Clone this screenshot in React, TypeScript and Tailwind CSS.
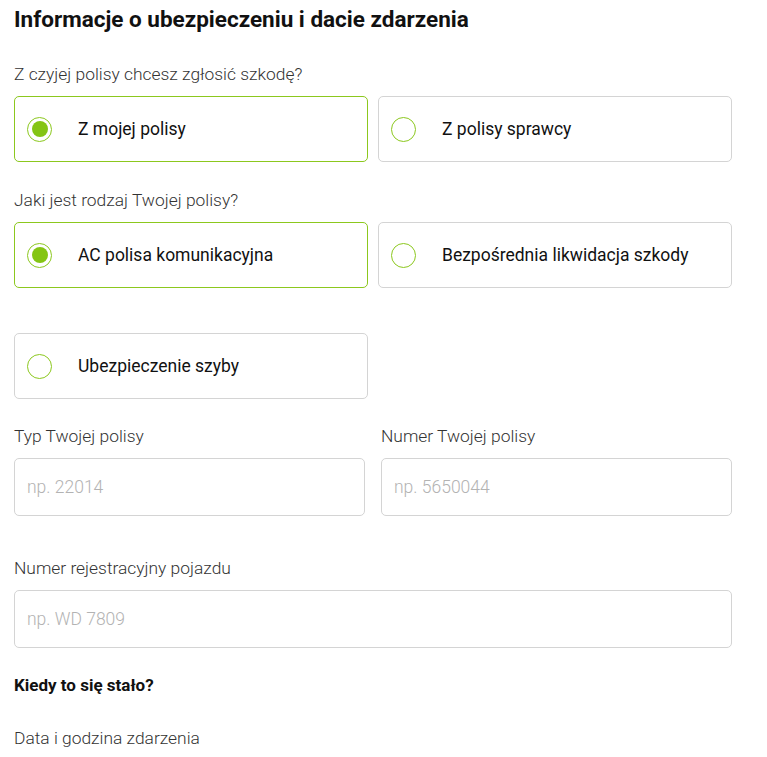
import { useState } from "react";

type Option = { id: string; label: string };

const Radio = ({ checked }: { checked: boolean }) => (
  <span className="w-[25px] h-[25px] shrink-0 rounded-full border-[1.5px] border-[#8cc81e] flex items-center justify-center">
    {checked && <span className="w-[16px] h-[16px] rounded-full bg-[#84c514]" />}
  </span>
);

const OptionCard = ({
  option,
  checked,
  onSelect,
}: {
  option: Option;
  checked: boolean;
  onSelect: () => void;
}) => (
  <button
    type="button"
    onClick={onSelect}
    className={`h-[66px] flex items-center gap-[26px] pl-[12px] rounded-[5px] border text-left bg-white cursor-pointer ${
      checked ? "border-[#8cc81e]" : "border-[#d4d4d4]"
    }`}
  >
    <Radio checked={checked} />
    <span className="text-[17.5px] text-[#111]">{option.label}</span>
  </button>
);

const Field = ({ label, placeholder }: { label: string; placeholder: string }) => (
  <label className="flex flex-col">
    <span className="text-[17.4px] leading-[24px] font-light text-[#333]">{label}</span>
    <input
      placeholder={placeholder}
      className="mt-[10px] h-[58px] w-full px-[12px] rounded-[5px] border border-[#d4d4d4] text-[17.5px] font-light text-[#222] placeholder:text-[#b3b3b3] outline-none"
    />
  </label>
);

const whose: Option[] = [
  { id: "mine", label: "Z mojej polisy" },
  { id: "other", label: "Z polisy sprawcy" },
];

const kinds: Option[] = [
  { id: "ac", label: "AC polisa komunikacyjna" },
  { id: "direct", label: "Bezpośrednia likwidacja szkody" },
  { id: "glass", label: "Ubezpieczenie szyby" },
];

export default function App() {
  const [source, setSource] = useState("mine");
  const [kind, setKind] = useState("ac");

  return (
    <div className="bg-white min-h-screen" style={{ fontFamily: "Roboto, 'Noto Sans', sans-serif" }}>
      <div className="w-[718px] ml-[14px] pt-[5px]">
        <h2 className="text-[22.5px] leading-[28px] font-bold text-[#111]">
          Informacje o ubezpieczeniu i dacie zdarzenia
        </h2>

        <p className="mt-[29px] text-[17.4px] leading-[24px] font-light text-[#333]">
          Z czyjej polisy chcesz zgłosić szkodę?
        </p>
        <div className="mt-[10px] grid grid-cols-2 gap-x-[10px]">
          {whose.map((o) => (
            <OptionCard key={o.id} option={o} checked={source === o.id} onSelect={() => setSource(o.id)} />
          ))}
        </div>

        <p className="mt-[26px] text-[17.4px] leading-[24px] font-light text-[#333]">
          Jaki jest rodzaj Twojej polisy?
        </p>
        <div className="mt-[10px] grid grid-cols-2 gap-x-[10px] gap-y-[45px]">
          {kinds.map((o) => (
            <OptionCard key={o.id} option={o} checked={kind === o.id} onSelect={() => setKind(o.id)} />
          ))}
        </div>

        <div className="mt-[25px] grid grid-cols-2 gap-x-[16px]">
          <Field label="Typ Twojej polisy" placeholder="np. 22014" />
          <Field label="Numer Twojej polisy" placeholder="np. 5650044" />
        </div>

        <div className="mt-[40px]">
          <Field label="Numer rejestracyjny pojazdu" placeholder="np. WD 7809" />
        </div>

        <h3 className="mt-[25px] text-[17px] leading-[24px] font-bold text-[#111]">Kiedy to się stało?</h3>

        <p className="mt-[29px] text-[17.4px] leading-[24px] font-light text-[#333]">Data i godzina zdarzenia</p>
      </div>
    </div>
  );
}
